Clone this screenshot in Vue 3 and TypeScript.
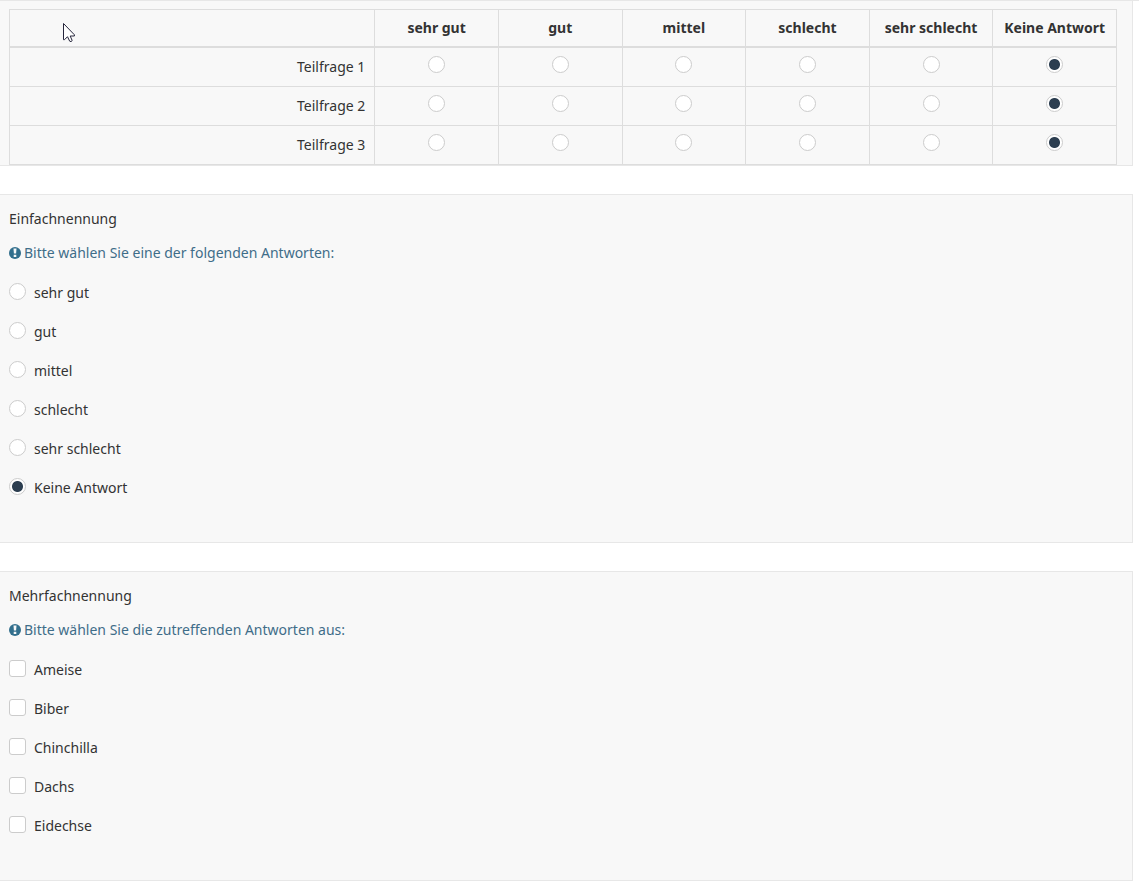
<script setup lang="ts">
import { ref } from 'vue'

const scale: string[] = ['sehr gut', 'gut', 'mittel', 'schlecht', 'sehr schlecht', 'Keine Antwort']
const rows: string[] = ['Teilfrage 1', 'Teilfrage 2', 'Teilfrage 3']
const animals: string[] = ['Ameise', 'Biber', 'Chinchilla', 'Dachs', 'Eidechse']

const matrix = ref<string[]>(rows.map(() => 'Keine Antwort'))
const single = ref<string>('Keine Antwort')
const multiple = ref<string[]>([])
</script>

<template>
  <main class="survey">
    <section class="panel matrix-panel">
      <table class="matrix">
        <colgroup>
          <col class="col-question" />
          <col v-for="s in scale" :key="s" />
        </colgroup>
        <thead>
          <tr>
            <td></td>
            <th v-for="s in scale" :key="s" scope="col">{{ s }}</th>
          </tr>
        </thead>
        <tbody>
          <tr v-for="(row, i) in rows" :key="row">
            <th scope="row">{{ row }}</th>
            <td v-for="s in scale" :key="s">
              <input
                v-model="matrix[i]"
                class="radio"
                type="radio"
                :name="'matrix-' + i"
                :value="s"
                :aria-label="row + ': ' + s"
              />
            </td>
          </tr>
        </tbody>
      </table>
    </section>

    <section class="panel">
      <h2 id="single-title">Einfachnennung</h2>
      <p class="hint">
        <svg class="icon" viewBox="0 0 12 12" aria-hidden="true">
          <circle cx="6" cy="6" r="6" />
          <path d="M4.5 1.6h3l-.4 5H4.9zM4.7 7.8h2.6v2.3H4.7z" />
        </svg>
        <span>Bitte wählen Sie eine der folgenden Antworten:</span>
      </p>
      <ul class="options" role="radiogroup" aria-labelledby="single-title">
        <li v-for="(s, i) in scale" :key="s">
          <input :id="'single-' + i" v-model="single" class="radio" type="radio" name="single" :value="s" />
          <label :for="'single-' + i">{{ s }}</label>
        </li>
      </ul>
    </section>

    <section class="panel">
      <h2 id="multiple-title">Mehrfachnennung</h2>
      <p class="hint">
        <svg class="icon" viewBox="0 0 12 12" aria-hidden="true">
          <circle cx="6" cy="6" r="6" />
          <path d="M4.5 1.6h3l-.4 5H4.9zM4.7 7.8h2.6v2.3H4.7z" />
        </svg>
        <span>Bitte wählen Sie die zutreffenden Antworten aus:</span>
      </p>
      <ul class="options" role="group" aria-labelledby="multiple-title">
        <li v-for="(a, i) in animals" :key="a">
          <input :id="'multiple-' + i" v-model="multiple" class="checkbox" type="checkbox" :value="a" />
          <label :for="'multiple-' + i">{{ a }}</label>
        </li>
      </ul>
    </section>

    <svg class="pointer" viewBox="0 0 13 20" aria-hidden="true">
      <path d="M.5.5v16.2h1l3-3 2.2 4.5 1.3.4 1.2-1-2-4.6h4.2v-1.2z" />
    </svg>
  </main>
</template>

<style>
body {
  margin: 0;
  background: #fff;
}
</style>

<style scoped>
.survey {
  position: relative;
  border-top: 1px solid #e7e7e7;
  font-family: "Noto Sans", "Open Sans", sans-serif;
  font-size: 14px;
  line-height: 20px;
  color: #333;
}

.panel {
  margin: 0 6px 28px 0;
  padding: 14px 15px 44px 9px;
  background: #f8f8f8;
  border: 1px solid #e7e7e7;
  border-left: 0;
}

.panel:last-of-type {
  margin-bottom: 0;
}

.matrix-panel {
  padding-top: 8px;
  padding-bottom: 0;
  border-top: 0;
}

.matrix {
  width: 100%;
  table-layout: fixed;
  border-collapse: separate;
  border-spacing: 0;
  border-top: 1px solid #ddd;
  border-left: 1px solid #ddd;
}

.col-question {
  width: 33%;
}

.matrix th,
.matrix td {
  box-sizing: border-box;
  height: 39px;
  padding: 0;
  border-right: 1px solid #ddd;
  border-bottom: 1px solid #ddd;
}

.matrix thead th,
.matrix thead td {
  height: 38px;
  border-bottom-width: 2px;
  font-weight: 700;
  text-align: center;
  white-space: nowrap;
}

.matrix tbody th {
  padding-right: 9px;
  font-weight: 400;
  text-align: right;
}

.matrix tbody td {
  padding-top: 8px;
  vertical-align: top;
}

.matrix .radio {
  margin: 0 auto;
}

h2 {
  margin: 0;
  font-size: 14px;
  font-weight: 400;
}

.hint {
  display: flex;
  align-items: center;
  gap: 3px;
  margin: 14px 0 20px;
  color: #3f6d89;
}

.icon {
  width: 12px;
  height: 12px;
  fill: #326f8d;
}

.icon path {
  fill: #f8f8f8;
}

.options {
  display: flex;
  flex-direction: column;
  gap: 19px;
  margin: 0;
  padding: 0;
  list-style: none;
}

.options li {
  display: flex;
  align-items: flex-start;
  gap: 8px;
}

.radio,
.checkbox {
  display: block;
  box-sizing: border-box;
  width: 17px;
  height: 17px;
  margin: 0;
  appearance: none;
  background: #fff;
  border: 1px solid #ccc;
}

.radio {
  border-radius: 50%;
}

.radio:checked {
  background: radial-gradient(circle, #2c3e50 5px, #fff 6px);
}

.checkbox {
  border-radius: 3px;
}

.checkbox:checked {
  background: #2c3e50;
}

.pointer {
  position: absolute;
  top: 22px;
  left: 63px;
  width: 13px;
  height: 20px;
  fill: #fff;
  stroke: #25253b;
  stroke-width: 1;
  pointer-events: none;
}
</style>
